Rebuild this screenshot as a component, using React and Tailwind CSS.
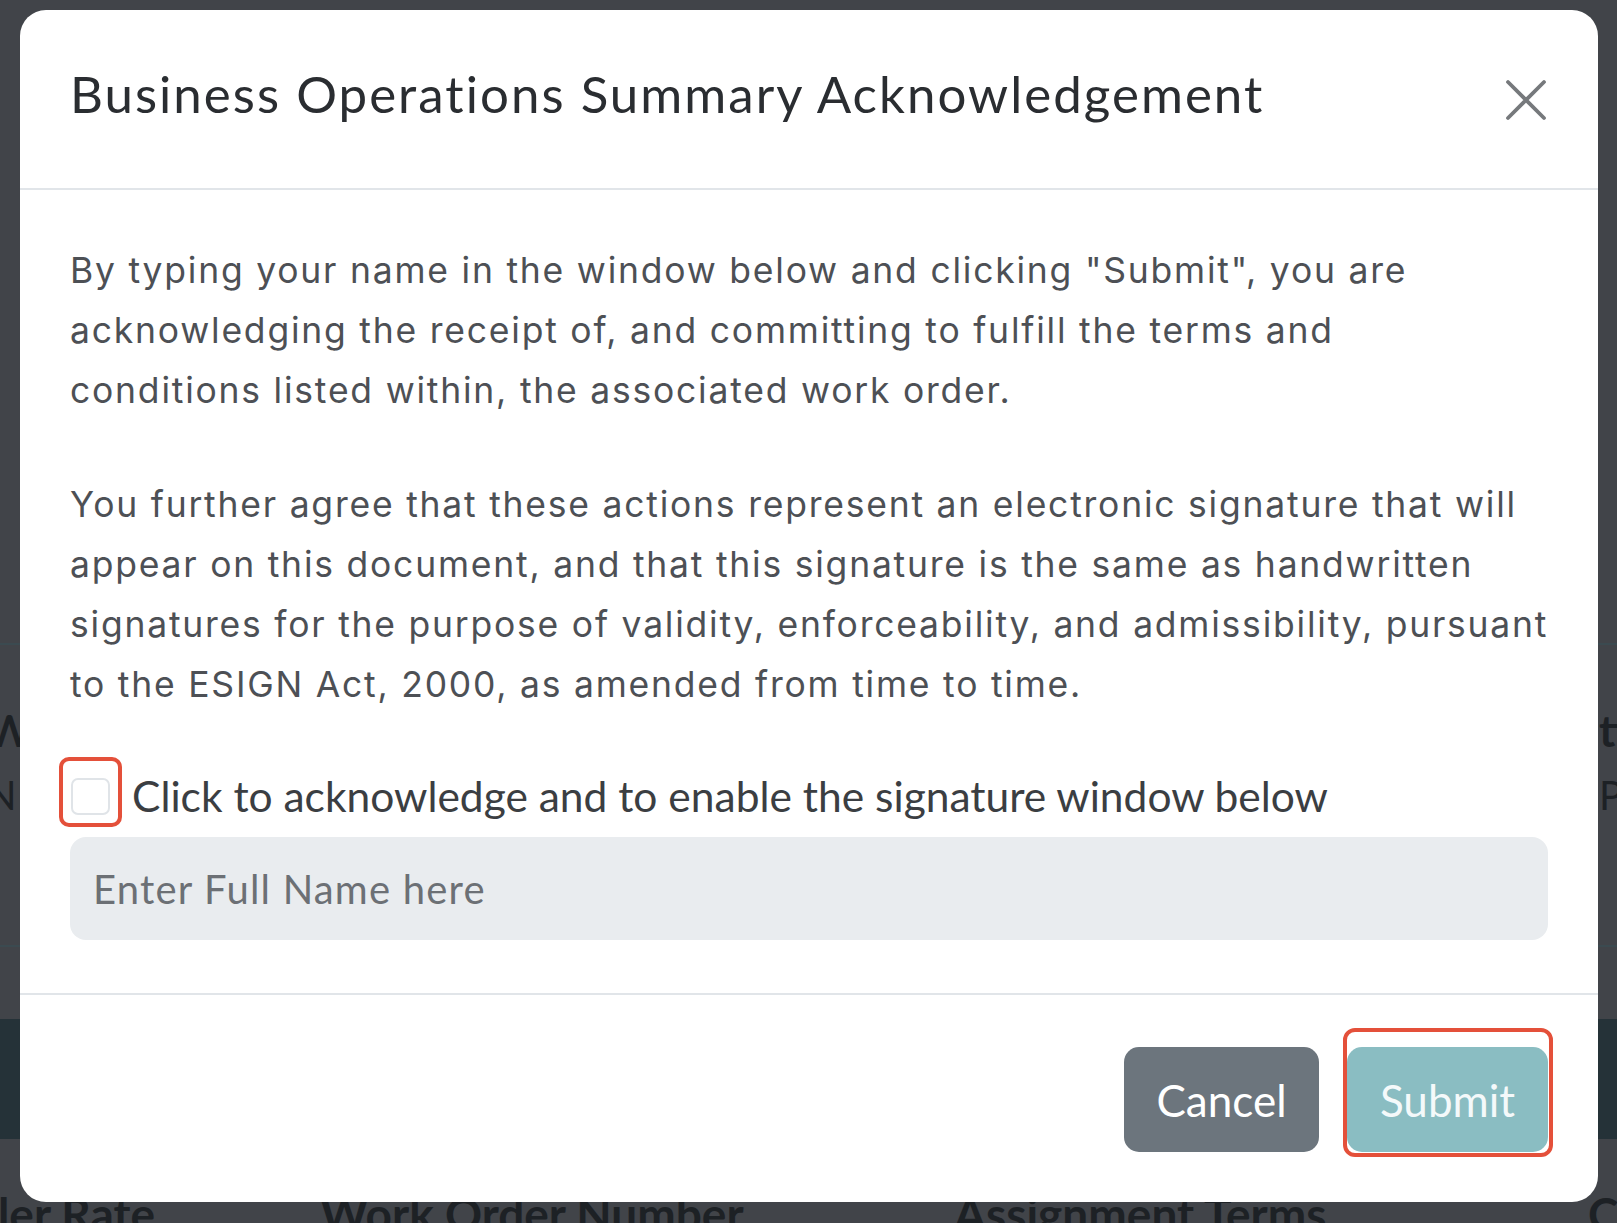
import React from "react";

const paragraphOne = [
  'By typing your name in the window below and clicking "Submit", you are',
  "acknowledging the receipt of, and committing to fulfill the terms and",
  "conditions listed within, the associated work order.",
];

const paragraphTwo = [
  "You further agree that these actions represent an electronic signature that will",
  "appear on this document, and that this signature is the same as handwritten",
  "signatures for the purpose of validity, enforceability, and admissibility, pursuant",
  "to the ESIGN Act, 2000, as amended from time to time.",
];

function CloseIcon() {
  return (
    <svg width="42" height="42" viewBox="0 0 42 42" fill="none" stroke="#76797c" strokeWidth="3.8" strokeLinecap="round">
      <path d="M3 3 L39 39 M39 3 L3 39" />
    </svg>
  );
}

// page behind the dimmed overlay, mostly hidden by the modal
function Backdrop() {
  return (
    <div className="font-[Lato,sans-serif] text-[#1d2125]">
      <div className="h-[645px] border-b-2 border-[#3b4a50]" />
      <div className="flex h-[302px] justify-between border-b-2 border-[#3b4a50] pt-[63px]">
        <div className="-ml-[14px] flex flex-col gap-[23px]">
          <span className="text-[44px] font-bold leading-none">W</span>
          <span className="text-[40px] leading-none">N</span>
        </div>
        <div className="flex w-[18px] flex-col gap-[23px] whitespace-nowrap">
          <span className="text-[44px] font-bold leading-none">tion</span>
          <span className="text-[40px] leading-none">P</span>
        </div>
      </div>
      <div className="mt-[72px] h-[120px] bg-[#253238]" />
      <div className="mt-[52px] flex whitespace-nowrap text-[46px] font-bold leading-none">
        <span className="-ml-[145px] w-[300px] shrink-0 text-right">Reseller Rate</span>
        <span className="w-[165px] shrink-0" />
        <span className="w-[634px] shrink-0">Work Order Number</span>
        <span className="w-[634px] shrink-0">Assignment Terms</span>
        <span className="shrink-0">Comments</span>
      </div>
    </div>
  );
}

export default function App() {
  return (
    <div className="relative h-[1223px] w-full overflow-hidden bg-[#414449]">
      <Backdrop />

      <div className="absolute left-[20px] top-[10px] flex h-[1192px] w-[1578px] flex-col rounded-[26px] bg-white">
        {/* header */}
        <div className="flex h-[180px] shrink-0 items-center justify-between border-b-2 border-[#e1e5e9] pb-[10px] pl-[50px] pr-[50px]">
          <h1 className="font-[Lato,sans-serif] text-[51px] font-normal tracking-[0.04em] text-[#2a2d31]">
            Business Operations Summary Acknowledgement
          </h1>
          <button className="mr-[1px] mt-[12px]">
            <CloseIcon />
          </button>
        </div>

        {/* body */}
        <div className="flex flex-col px-[50px] pb-[53px] pt-[51px]">
          <p className="mb-[54px] font-[Inter,sans-serif] text-[35.5px] leading-[60px] tracking-[0.05em] text-[#4d5055]">
            {paragraphOne.map((line) => (
              <span key={line} className="block whitespace-nowrap">
                {line}
              </span>
            ))}
          </p>
          <p className="font-[Inter,sans-serif] text-[35.5px] leading-[60px] tracking-[0.05em] text-[#4d5055]">
            {paragraphTwo.map((line) => (
              <span key={line} className="block whitespace-nowrap">
                {line}
              </span>
            ))}
          </p>

          <label className="mt-[51px] flex h-[60px] items-center">
            <span className="relative ml-[1px] flex">
              <span className="h-[37px] w-[39px] rounded-[7px] border-2 border-[#e0e4e8] bg-white" />
              <span className="absolute -bottom-[12px] -left-[12px] -right-[12px] -top-[21px] rounded-[10px] border-[4px] border-[#e4503a]" />
            </span>
            <span className="ml-[22px] whitespace-nowrap font-[Lato,sans-serif] text-[42.5px] text-[#3b3e42]">
              Click to acknowledge and to enable the signature window below
            </span>
          </label>

          <input
            disabled
            placeholder="Enter Full Name here"
            className="mt-[11px] h-[103px] w-full rounded-[16px] bg-[#e9ecef] px-[23px] font-[Lato,sans-serif] text-[40px] tracking-[0.03em] text-[#6c757d] outline-none placeholder:text-[#6c7075]"
          />
        </div>

        {/* footer */}
        <div className="flex justify-end gap-[28px] border-t-2 border-[#e1e5e9] px-[50px] pb-[47px] pt-[52px]">
          <button className="h-[105px] w-[195px] rounded-[15px] bg-[#6c757d] font-[Lato,sans-serif] text-[44px] text-white">
            Cancel
          </button>
          <div className="relative">
            <button className="h-[105px] w-[201px] rounded-[15px] bg-[#8abdc2] font-[Lato,sans-serif] text-[44px] text-[#f4f9fa]">
              Submit
            </button>
            <span className="absolute -bottom-[5px] -left-[4px] -right-[5px] -top-[19px] rounded-[12px] border-[4px] border-[#e4503a]" />
          </div>
        </div>
      </div>
    </div>
  );
}
